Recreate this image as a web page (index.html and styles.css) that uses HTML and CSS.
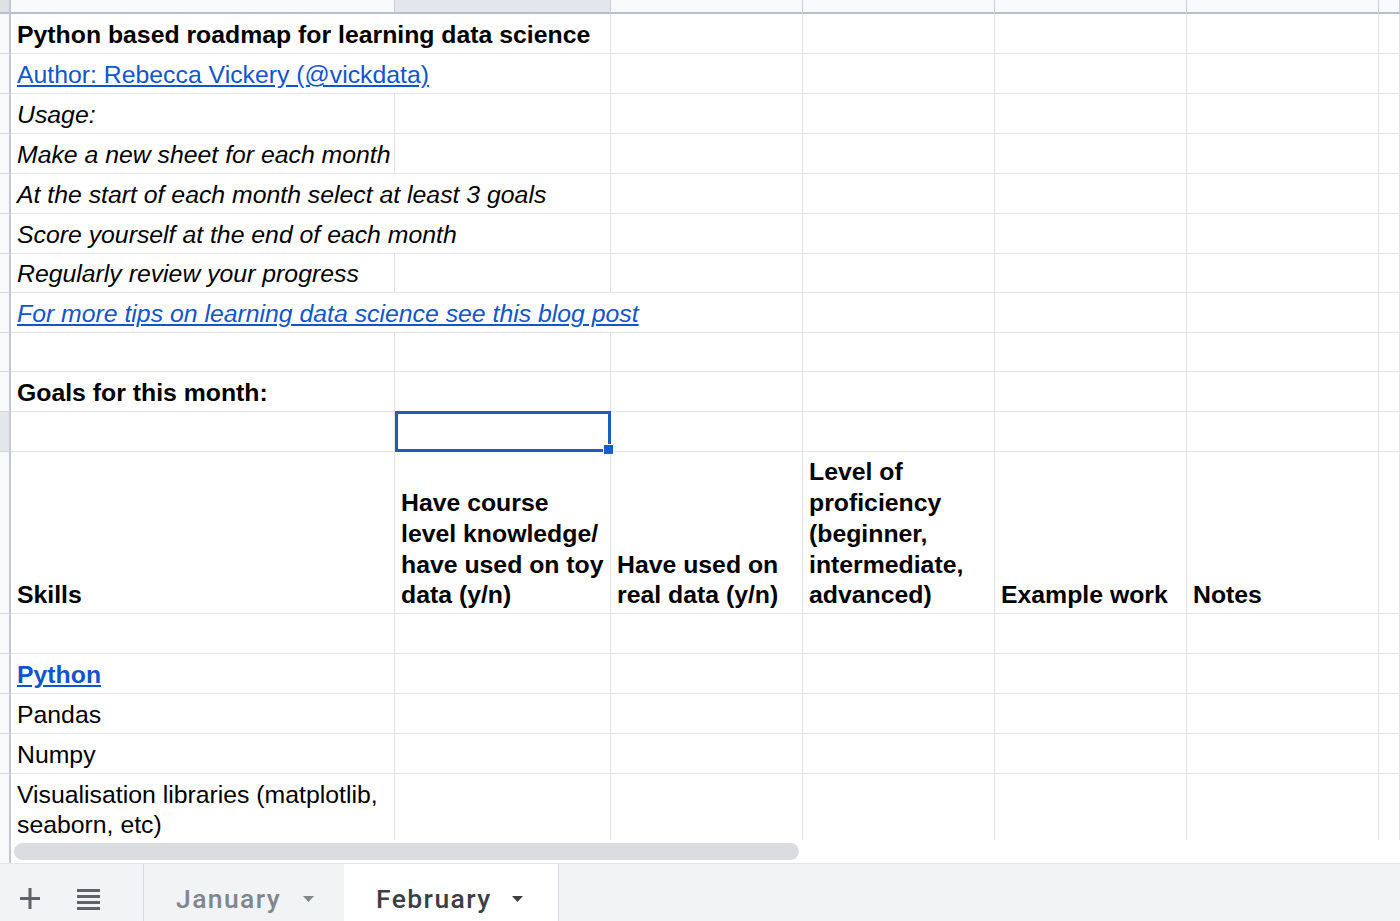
FILE: index.html
```html
<!DOCTYPE html>
<html lang="en">
<head>
<meta charset="utf-8">
<title>Python based roadmap for learning data science</title>
<link rel="stylesheet" href="styles.css">
</head>
<body>
<div class="grid">
  <!-- column headers -->
  <div class="corner"></div>
  <div class="ch"></div>
  <div class="ch ch-sel"></div>
  <div class="ch"></div>
  <div class="ch"></div>
  <div class="ch"></div>
  <div class="ch"></div>
  <div class="ch"></div>

  <!-- row 1 -->
  <div class="rh"></div>
  <div class="c s2 nw b">Python based roadmap for learning data science</div>
  <div class="c"></div><div class="c"></div><div class="c"></div><div class="c"></div><div class="c"></div>

  <!-- row 2 -->
  <div class="rh"></div>
  <div class="c s2 nw"><a class="lnk" href="#">Author: Rebecca Vickery (@vickdata)</a></div>
  <div class="c"></div><div class="c"></div><div class="c"></div><div class="c"></div><div class="c"></div>

  <!-- row 3 -->
  <div class="rh"></div>
  <div class="c nw i">Usage:</div>
  <div class="c"></div><div class="c"></div><div class="c"></div><div class="c"></div><div class="c"></div><div class="c"></div>

  <!-- row 4 -->
  <div class="rh"></div>
  <div class="c nw i">Make a new sheet for each month</div>
  <div class="c"></div><div class="c"></div><div class="c"></div><div class="c"></div><div class="c"></div><div class="c"></div>

  <!-- row 5 -->
  <div class="rh"></div>
  <div class="c s2 nw i">At the start of each month select at least 3 goals</div>
  <div class="c"></div><div class="c"></div><div class="c"></div><div class="c"></div><div class="c"></div>

  <!-- row 6 -->
  <div class="rh"></div>
  <div class="c s2 nw i">Score yourself at the end of each month</div>
  <div class="c"></div><div class="c"></div><div class="c"></div><div class="c"></div><div class="c"></div>

  <!-- row 7 -->
  <div class="rh"></div>
  <div class="c nw i">Regularly review your progress</div>
  <div class="c"></div><div class="c"></div><div class="c"></div><div class="c"></div><div class="c"></div><div class="c"></div>

  <!-- row 8 -->
  <div class="rh"></div>
  <div class="c s3 nw i"><a class="lnk" href="#">For more tips on learning data science see this blog post</a></div>
  <div class="c"></div><div class="c"></div><div class="c"></div><div class="c"></div>

  <!-- row 9 -->
  <div class="rh"></div>
  <div class="c"></div><div class="c"></div><div class="c"></div><div class="c"></div><div class="c"></div><div class="c"></div><div class="c"></div>

  <!-- row 10 -->
  <div class="rh"></div>
  <div class="c nw b">Goals for this month:</div>
  <div class="c"></div><div class="c"></div><div class="c"></div><div class="c"></div><div class="c"></div><div class="c"></div>

  <!-- row 11 -->
  <div class="rh rh-sel"></div>
  <div class="c"></div>
  <div class="c selcell"><div class="sel"><span class="handle"></span></div></div>
  <div class="c"></div><div class="c"></div><div class="c"></div><div class="c"></div><div class="c"></div>

  <!-- row 12: column titles -->
  <div class="rh"></div>
  <div class="c b">Skills</div>
  <div class="c b">Have course level knowledge/ have used on toy data (y/n)</div>
  <div class="c b">Have used on real data (y/n)</div>
  <div class="c b">Level of proficiency (beginner, intermediate, advanced)</div>
  <div class="c b nw">Example work</div>
  <div class="c b nw">Notes</div>
  <div class="c"></div>

  <!-- row 13 -->
  <div class="rh"></div>
  <div class="c"></div><div class="c"></div><div class="c"></div><div class="c"></div><div class="c"></div><div class="c"></div><div class="c"></div>

  <!-- row 14 -->
  <div class="rh"></div>
  <div class="c nw b"><a class="lnk" href="#">Python</a></div>
  <div class="c"></div><div class="c"></div><div class="c"></div><div class="c"></div><div class="c"></div><div class="c"></div>

  <!-- row 15 -->
  <div class="rh"></div>
  <div class="c nw">Pandas</div>
  <div class="c"></div><div class="c"></div><div class="c"></div><div class="c"></div><div class="c"></div><div class="c"></div>

  <!-- row 16 -->
  <div class="rh"></div>
  <div class="c nw">Numpy</div>
  <div class="c"></div><div class="c"></div><div class="c"></div><div class="c"></div><div class="c"></div><div class="c"></div>

  <!-- row 17 -->
  <div class="rh"></div>
  <div class="c">Visualisation libraries (matplotlib, seaborn, etc)</div>
  <div class="c"></div><div class="c"></div><div class="c"></div><div class="c"></div><div class="c"></div><div class="c"></div>
</div>

<div class="hscroll">
  <div class="hs-strip"></div>
  <div class="thumb"></div>
</div>

<div class="tabbar">
  <div class="tb-icons">
    <svg class="ico-plus" width="20" height="21" viewBox="0 0 20 21" aria-label="Add sheet">
      <path d="M8.5 0h3v9H20v3h-8.5v9h-3v-9H0V9h8.5z" fill="#5f6368"/>
    </svg>
    <svg class="ico-list" width="23" height="22" viewBox="0 0 23 22" aria-label="All sheets">
      <rect x="0" y="1" width="23" height="3" fill="#5f6368"/>
      <rect x="0" y="7" width="23" height="3" fill="#5f6368"/>
      <rect x="0" y="13" width="23" height="3" fill="#5f6368"/>
      <rect x="0" y="19" width="23" height="3" fill="#5f6368"/>
    </svg>
  </div>
  <div class="tab">
    <span class="tab-name">January</span>
    <svg class="caret" width="11" height="6" viewBox="0 0 11 6"><path d="M0 0h11L5.5 6z"/></svg>
  </div>
  <div class="tab tab-active">
    <span class="tab-name">February</span>
    <svg class="caret" width="11" height="6" viewBox="0 0 11 6"><path d="M0 0h11L5.5 6z"/></svg>
  </div>
</div>
</body>
</html>
```

FILE: styles.css
```css
* {
  box-sizing: border-box;
}

html, body {
  margin: 0;
  padding: 0;
}

body {
  width: 1400px;
  height: 921px;
  overflow: hidden;
  background: #ffffff;
  font-family: "Liberation Sans", Arial, sans-serif;
  color: #000000;
}

/* ---------- grid ---------- */
.grid {
  display: grid;
  grid-template-columns: 11px 384px 216px 192px 192px 192px 192px 1fr;
  grid-template-rows: 14px 40px 40px 40px 40px 40px 40px 39px 40px 39px 40px 40px 162px 40px 40px 40px 40px 70px;
  height: 840px;
  overflow: hidden;
}

.corner {
  background: #dfe1e5;
  border-right: 2px solid #c3c8d1;
  border-bottom: 2px solid #b7bfcb;
}

.ch {
  background: #f8f9fa;
  border-right: 1px solid #c9cdd3;
  border-bottom: 2px solid #b7bfcb;
}

.ch-sel {
  background: #e3e6ea;
}

.rh {
  background: #f8f9fa;
  border-right: 2px solid #c3c8d1;
  border-bottom: 1px solid #d3d6db;
}

.rh-sel {
  background: #e3e6ea;
}

.c {
  border-right: 1px solid #e2e3e3;
  border-bottom: 1px solid #e2e3e3;
  padding: 0 5px 2px 6px;
  font-size: 24.8px;
  line-height: 30.7px;
  display: flex;
  flex-direction: column;
  justify-content: flex-end;
  min-width: 0;
}

.nw {
  white-space: nowrap;
}

.b {
  font-weight: bold;
}

.i {
  font-style: italic;
}

.s2 {
  grid-column: span 2;
}

.s3 {
  grid-column: span 3;
}

.lnk {
  color: #1155cc;
  text-decoration: underline;
}

/* ---------- selection ---------- */
.selcell {
  position: relative;
}

.sel {
  position: absolute;
  left: 0;
  top: -1px;
  right: -1px;
  bottom: -1px;
  border: 3px solid #1f5bc6;
  z-index: 2;
}

.handle {
  position: absolute;
  right: -6px;
  bottom: -6px;
  width: 11px;
  height: 11px;
  background: #1f5bc6;
  border: 1px solid #ffffff;
}

/* ---------- horizontal scroll ---------- */
.hscroll {
  display: flex;
  height: 23px;
}

.hs-strip {
  width: 11px;
  background: #f8f9fa;
  border-right: 2px solid #c3c8d1;
}

.thumb {
  margin: 3px 0 0 3px;
  width: 785px;
  height: 17px;
  border-radius: 9px;
  background: #dadce0;
}

/* ---------- sheet tabs ---------- */
.tabbar {
  display: flex;
  height: 58px;
  background: #f1f3f4;
  border-top: 1px solid #e3e5e8;
}

.tb-icons {
  width: 143px;
  display: flex;
  align-items: center;
  padding: 12px 0 0 20px;
  gap: 37px;
}

.tab {
  display: flex;
  align-items: center;
  width: 201px;
  padding: 12px 0 0 32px;
  border-left: 1px solid #dadce0;
  font-family: Roboto, "Liberation Sans", sans-serif;
  font-weight: 500;
  font-size: 26.5px;
  letter-spacing: 1.4px;
  color: #80868b;
}

.tab .caret {
  margin-left: 22px;
  fill: #80868b;
}

.tab-active {
  width: 215px;
  padding-left: 32px;
  background: #ffffff;
  color: #3c4043;
  border-left: none;
  border-right: 1px solid #dadce0;
}

.tab-active .caret {
  margin-left: 20px;
  fill: #3c4043;
}
```
